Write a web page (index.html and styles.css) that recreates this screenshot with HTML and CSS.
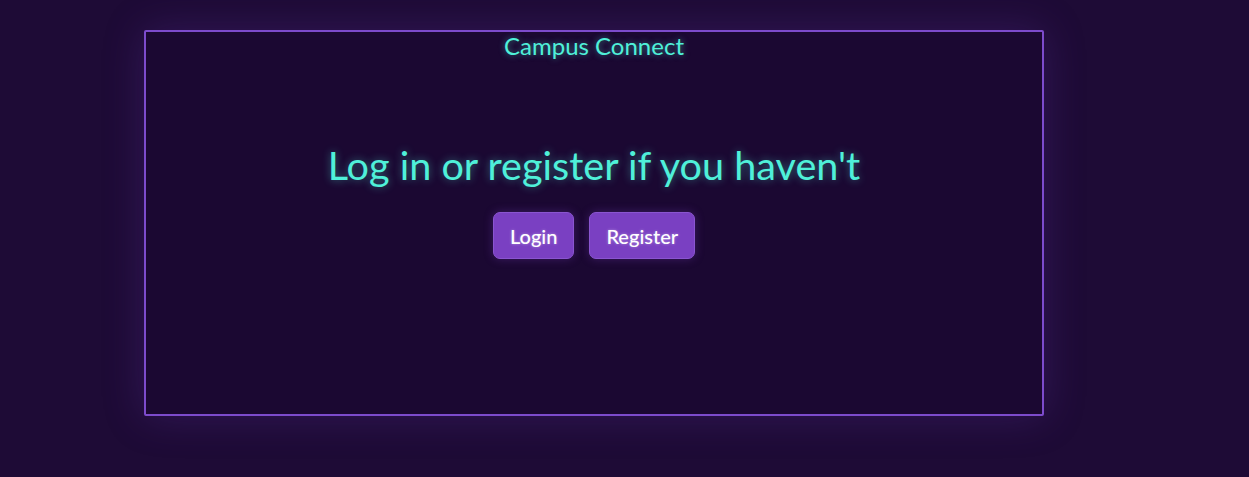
FILE: index.html
```html
<!DOCTYPE html>
<html>
<head>
<meta charset="utf-8">
<link rel="stylesheet" href="styles.css">
</head>
<body>
<div class="card">
  <div class="brand">Campus Connect</div>
  <h1 class="headline">Log in or register if you haven't</h1>
  <div class="actions">
    <button class="btn">Login</button>
    <button class="btn">Register</button>
  </div>
</div>
</body>
</html>
```
FILE: styles.css
```css
html, body {
  margin: 0;
  padding: 0;
  background: #1e0b36;
  font-family: Lato, "Open Sans", sans-serif;
  height: 100%;
}
body {
  padding-top: 30px;
  box-sizing: border-box;
}
.card {
  margin-left: 144px;
  width: 900px;
  height: 386px;
  box-sizing: border-box;
  border: 2px solid #7d4bcc;
  border-radius: 2px;
  background: #1b0832;
  box-shadow: 0 0 40px rgba(110, 60, 190, 0.25);
  display: flex;
  flex-direction: column;
  align-items: center;
}
.brand {
  color: #4ff0d9;
  font-size: 24px;
  line-height: 28px;
  margin-top: 0;
  text-shadow: 0 0 6px rgba(79, 240, 217, 0.5);
}
.headline {
  margin: 80px 0 0;
  color: #4ff0d9;
  font-weight: 400;
  font-size: 39.6px;
  line-height: 50px;
  text-shadow: 0 0 8px rgba(79, 240, 217, 0.45);
}
.actions {
  display: flex;
  gap: 15px;
  margin-top: 22px;
}
.btn {
  font-family: Lato, "Open Sans", sans-serif;
  font-size: 20px;
  font-weight: 500;
  color: #ffffff;
  background: #7a40c2;
  border: 1px solid #8a55d0;
  border-radius: 7px;
  padding: 0 16px;
  height: 47px;
  box-shadow: 0 0 10px rgba(122, 64, 194, 0.35);
  text-shadow: 0 0 3px rgba(255,255,255,0.4);
}
```
